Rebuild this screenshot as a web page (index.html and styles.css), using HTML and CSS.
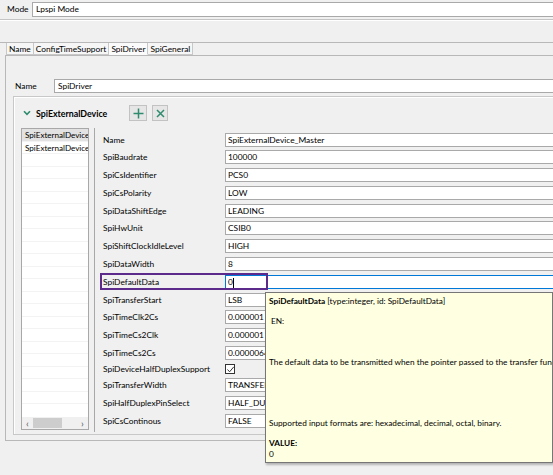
FILE: index.html
```html
<!DOCTYPE html>
<html lang="en">
<head>
  <meta charset="UTF-8">
  <title>SpiDriver - Lpspi Mode</title>
  <link rel="stylesheet" href="styles.css">
</head>
<body>

<div class="mode-row">
  <span class="mode-label">Mode</span>
  <div class="text-field">Lpspi Mode</div>
</div>
<div class="rule"></div>

<div class="tab-strip">
  <div class="tab">Name</div>
  <div class="tab">ConfigTimeSupport</div>
  <div class="tab active">SpiDriver</div>
  <div class="tab">SpiGeneral</div>
</div>

<div class="tab-panel">
  <div class="name-row">
    <span class="name-label">Name</span>
    <div class="text-field">SpiDriver</div>
  </div>

  <div class="group">
    <div class="group-head">
      <svg class="chevron" width="8" height="6" viewBox="0 0 8 6"><path d="M1 1.2 L4 4.4 L7 1.2" fill="none" stroke="#2e8b6e" stroke-width="1.6"/></svg>
      <span class="group-title">SpiExternalDevice</span>
      <button class="tool-btn add"><svg width="11" height="11" viewBox="0 0 11 11"><path d="M5.5 0.5 V10.5 M0.5 5.5 H10.5" stroke="#2e8b6e" stroke-width="1.5"/></svg></button>
      <button class="tool-btn"><svg width="9" height="9" viewBox="0 0 9 9"><path d="M1 1 L8 8 M8 1 L1 8" stroke="#2e8b6e" stroke-width="1.5"/></svg></button>
    </div>

    <div class="group-body">
      <div class="device-list">
        <div class="list-items">
          <div class="list-item selected">SpiExternalDevice_Master</div>
          <div class="list-item">SpiExternalDevice_Slave</div>
          <div class="list-item"></div>
          <div class="list-item"></div>
          <div class="list-item"></div>
          <div class="list-item"></div>
          <div class="list-item"></div>
          <div class="list-item"></div>
          <div class="list-item"></div>
          <div class="list-item"></div>
          <div class="list-item"></div>
          <div class="list-item"></div>
          <div class="list-item"></div>
          <div class="list-item"></div>
          <div class="list-item"></div>
          <div class="list-item"></div>
          <div class="list-item"></div>
          <div class="list-item"></div>
          <div class="list-item"></div>
          <div class="list-item"></div>
          <div class="list-item"></div>
          <div class="list-item"></div>
        </div>
        <div class="hscroll">
          <span class="arrow">&lsaquo;</span>
          <div class="track"><div class="thumb"></div></div>
          <span class="arrow">&rsaquo;</span>
        </div>
      </div>

      <div class="divider"></div>

      <div class="props">
        <div class="prop-label">Name</div>
        <div class="text-field">SpiExternalDevice_Master</div>
        <div class="prop-label">SpiBaudrate</div>
        <div class="text-field">100000</div>
        <div class="prop-label">SpiCsIdentifier</div>
        <div class="text-field">PCS0</div>
        <div class="prop-label">SpiCsPolarity</div>
        <div class="text-field">LOW</div>
        <div class="prop-label">SpiDataShiftEdge</div>
        <div class="text-field">LEADING</div>
        <div class="prop-label">SpiHwUnit</div>
        <div class="text-field">CSIB0</div>
        <div class="prop-label">SpiShiftClockIdleLevel</div>
        <div class="text-field">HIGH</div>
        <div class="prop-label">SpiDataWidth</div>
        <div class="text-field">8</div>
        <div class="prop-label">SpiDefaultData</div>
        <div class="text-field focused">0<span class="caret"></span></div>
        <div class="prop-label">SpiTransferStart</div>
        <div class="text-field">LSB</div>
        <div class="prop-label">SpiTimeClk2Cs</div>
        <div class="text-field">0.000001</div>
        <div class="prop-label">SpiTimeCs2Clk</div>
        <div class="text-field">0.000001</div>
        <div class="prop-label">SpiTimeCs2Cs</div>
        <div class="text-field">0.0000064</div>
        <div class="prop-label check-row">SpiDeviceHalfDuplexSupport</div>
        <div class="check-row">
          <span class="checkbox"><svg width="9" height="9" viewBox="0 0 9 9"><path d="M1.5 4.5 L3.6 6.8 L7.8 1.8" fill="none" stroke="#333" stroke-width="1"/></svg></span>
        </div>
        <div class="prop-label">SpiTransferWidth</div>
        <div class="text-field">TRANSFER_WIDTH_8</div>
        <div class="prop-label">SpiHalfDuplexPinSelect</div>
        <div class="text-field">HALF_DUPLEX_SIN</div>
        <div class="prop-label">SpiCsContinous</div>
        <div class="text-field">FALSE</div>
      </div>
    </div>
  </div>
</div>

<!-- highlight around the hovered parameter -->
<div class="highlight"></div>

<div class="tooltip">
  <div><b>SpiDefaultData</b> [type:integer, id: SpiDefaultData]</div>
  <div class="tip-en">EN:</div>
  <div class="tip-desc">The default data to be transmitted when the pointer passed to the transfer function is NULL.</div>
  <div class="tip-formats">Supported input formats are: hexadecimal, decimal, octal, binary.</div>
  <div class="tip-value"><b>VALUE:</b></div>
  <div>0</div>
</div>

</body>
</html>
```

FILE: styles.css
```css
* {
  box-sizing: border-box;
}

body {
  margin: 0;
  background: #f0f0f0;
  font-family: Lato, "Open Sans", sans-serif;
  font-size: 8.4px;
  color: #000;
  overflow: hidden;
  height: 475px;
  position: relative;
}

.text-field {
  background: #fff;
  border: 1px solid #a9a9a9;
  height: 14px;
  line-height: 12px;
  padding: 0 2px;
  white-space: nowrap;
  overflow: hidden;
  margin-right: -6px;
}

.mode-row {
  display: flex;
  align-items: center;
  height: 17px;
  padding: 1px 0 0 7px;
}

.mode-label {
  width: 25px;
}

.mode-row .text-field {
  flex: 1;
  height: 15px;
  line-height: 13px;
  padding-left: 3px;
}

.rule {
  margin-top: 2px;
  height: 2px;
  border-top: 1px solid #c4c4c4;
  border-bottom: 1px solid #fff;
}

.tab-strip {
  display: flex;
  margin-top: 21px;
  padding-left: 6px;
  height: 13px;
  border-top: 1px solid #b8b8b8;
}

.tab {
  border: 1px solid #c8c8c8;
  border-top: none;
  border-left: none;
  background: #f6f6f6;
  padding: 0 2px;
  line-height: 12px;
}

.tab:first-child {
  border-left: 1px solid #c8c8c8;
}

.tab.active {
  background: #fbfbfb;
  border-bottom-color: #fbfbfb;
}

.tab-panel {
  margin-left: 5px;
  margin-right: -6px;
  height: 386px;
  border: 1px solid #b8b8b8;
  border-right: none;
  padding: 23px 0 0 7px;
}

.name-row {
  display: flex;
  align-items: center;
  height: 14px;
}

.name-label {
  width: 41px;
  padding-left: 2px;
}

.name-row .text-field {
  flex: 1;
  padding-left: 3px;
}

.group {
  margin-top: 3px;
  height: 339px;
  border: 1px solid #c8c8c8;
  border-right: none;
  box-shadow: inset 1px 1px 0 #fff;
  padding: 0 0 0 7px;
}

.group-head {
  display: flex;
  align-items: center;
  height: 31px;
  padding-left: 2px;
  padding-top: 1px;
}

.chevron {
  margin-right: 5px;
}

.group-title {
  font-weight: bold;
  font-size: 8.8px;
  width: 93px;
}

.tool-btn {
  width: 18px;
  height: 16px;
  margin-right: 5px;
  border: 1px solid #c2c2c2;
  background: #e6e6e6;
  padding: 0;
  display: flex;
  align-items: center;
  justify-content: center;
}

.tool-btn + .tool-btn {
  width: 16px;
}

.group-body {
  display: flex;
  height: 305px;
}

.device-list {
  width: 68px;
  height: 302px;
  border: 1px solid #a8a8a8;
  background: #fff;
  display: flex;
  flex-direction: column;
  font-size: 8.1px;
}

.list-items {
  flex: 1;
  overflow: hidden;
}

.list-item {
  height: 12.5px;
  line-height: 12px;
  padding-left: 3px;
  white-space: nowrap;
  overflow: hidden;
  text-overflow: clip;
  border-bottom: 1px solid #f3f3f3;
}

.list-item.selected {
  background: #e2e2e2;
}

.hscroll {
  display: flex;
  align-items: center;
  height: 13px;
  background: #f0f0f0;
  border-top: 1px solid #fff;
}

.arrow {
  width: 11px;
  text-align: center;
  font-size: 10px;
  line-height: 10px;
  color: #555;
}

.track {
  flex: 1;
}

.thumb {
  width: 29px;
  height: 10px;
  background: #cdcdcd;
}

.divider {
  width: 1px;
  height: 304px;
  background: #a8a8a8;
  margin-left: 5px;
}

.props {
  flex: 1;
  display: grid;
  grid-template-columns: 130px 1fr;
  align-items: center;
  row-gap: 3.8px;
  padding: 4.5px 0 0 0;
  align-content: start;
}

.prop-label {
  padding-left: 8px;
  white-space: nowrap;
  height: 14px;
  line-height: 14px;
}

.prop-label.check-row,
.check-row {
  height: 10.5px;
  line-height: 10.5px;
}

.checkbox {
  display: block;
  width: 10px;
  height: 10px;
  border: 1px solid #333;
  background: #fff;
}

.checkbox svg {
  display: block;
}

.text-field.focused {
  border-color: #0078d7;
}

.caret {
  display: inline-block;
  width: 1px;
  height: 10px;
  background: #000;
  vertical-align: middle;
}

.highlight {
  position: absolute;
  left: 100px;
  top: 273px;
  width: 168px;
  height: 17px;
  border: 2px solid #5c2a8a;
}

.tooltip {
  position: absolute;
  left: 265px;
  top: 292px;
  width: 288px;
  height: 171px;
  background: #ffffe1;
  border: 1px solid #767676;
  box-shadow: 1px 2px 2px rgba(0, 0, 0, 0.25);
  padding: 3px 0 0 3px;
  white-space: nowrap;
  overflow: hidden;
  line-height: 11px;
  font-size: 8.25px;
}

.tip-en {
  margin-top: 9px;
  padding-left: 2px;
}

.tip-desc {
  margin-top: 30px;
}

.tip-formats {
  margin-top: 50px;
}

.tip-value {
  margin-top: 9px;
}
```
